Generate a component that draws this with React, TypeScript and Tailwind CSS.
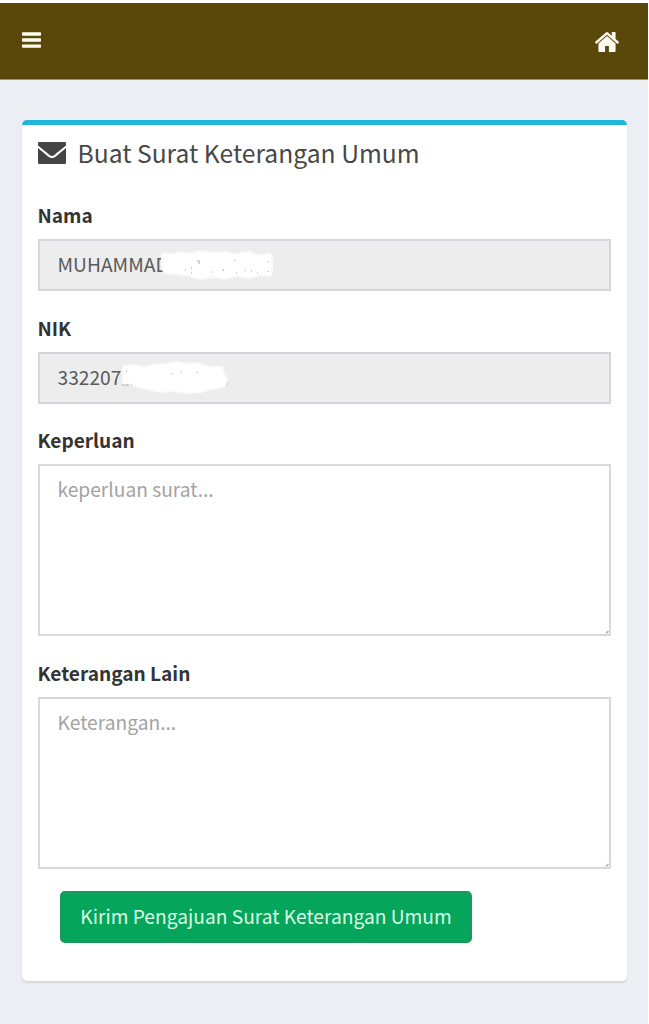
import type { ReactNode } from "react";

function BarsIcon() {
  return (
    <svg className="h-[16px] w-[19px]" viewBox="0 0 19 16" fill="#fffdf0" aria-hidden="true">
      <rect x="0" y="0.2" width="19" height="3.5" rx="0.7" />
      <rect x="0" y="6.3" width="19" height="3.4" rx="0.7" />
      <rect x="0" y="12.4" width="19" height="3.4" rx="0.7" />
    </svg>
  );
}

function HomeIcon() {
  return (
    <svg className="h-[20px] w-[24px]" viewBox="89 248 1614 1288" preserveAspectRatio="none" fill="#fffdf4" aria-hidden="true">
      <path d="M1472 992v480q0 26-19 45t-45 19h-384v-384h-256v384h-384q-26 0-45-19t-19-45v-480q0-1 .5-3t.5-3l575-474 575 474q1 2 1 6zm223-69l-62 74q-8 9-21 11h-3q-13 0-21-7l-692-577-692 577q-12 8-24 7-13-2-21-11l-62-74q-8-10-7-23.5t11-21.5l719-599q32-26 76-26t76 26l244 204v-195q0-14 9-23t23-9h192q14 0 23 9t9 23v408l219 182q10 8 11 21.5t-7 23.5z" />
    </svg>
  );
}

function EnvelopeIcon() {
  return (
    <svg className="h-[22px] w-[28px]" viewBox="0 0 28 22" fill="#444444" aria-hidden="true">
      <path d="M1.2 0H26.8Q28 0 28 1.2V3.6C24 7 19.5 10.4 16.4 13Q14 14.9 11.6 13C8.5 10.4 4 7 0 3.6V1.2Q0 0 1.2 0Z" />
      <path d="M0 6C4 9.4 7.8 12.5 10.4 14.7Q14 17.4 17.6 14.7C20.2 12.5 24 9.4 28 6V20.8Q28 22 26.8 22H1.2Q0 22 0 20.8Z" />
    </svg>
  );
}

function Label({ children, htmlFor }: { children: ReactNode; htmlFor: string }) {
  return (
    <label htmlFor={htmlFor} className="block h-[36px] text-[19.1px] leading-[25px] font-bold text-[#333]">
      {children}
    </label>
  );
}

function ReadonlyField({ id, value, children }: { id: string; value: string; children: ReactNode }) {
  return (
    <div className="relative">
      <input
        id={id}
        readOnly
        value={value}
        className="block h-[52px] w-full border-2 border-[#d5d6dc] bg-[#ededee] px-[18px] pb-[3px] text-[19.2px] text-[#5b5b5b] outline-none"
      />
      {children}
    </div>
  );
}

function TextField({ id, placeholder }: { id: string; placeholder: string }) {
  return (
    <div className="relative">
      <textarea
        id={id}
        placeholder={placeholder}
        className="block h-[172px] w-full resize-none border-2 border-[#d8d9da] bg-white px-[18px] py-[9px] text-[19.2px] leading-[28px] outline-none placeholder:text-[#a3a3a3]"
      />
      <svg className="absolute right-[2px] bottom-[2px] h-[4px] w-[4px]" viewBox="0 0 4 4" aria-hidden="true">
        <path d="M1 3.5L3.5 1" stroke="#aaa" strokeWidth="1.4" />
      </svg>
    </div>
  );
}

export default function App() {
  return (
    <div className="h-[1024px] w-full overflow-hidden bg-white pt-[3px] pr-px font-['Noto_Sans_CJK_SC','Noto_Sans',sans-serif]">
      <div className="h-full bg-[#ebeef3]">
        <header className="flex h-[77px] items-center justify-between border-b border-[#a09365] bg-[#5a480b] pr-[29px] pl-[22px]">
          <button type="button" aria-label="Menu" className="-mt-[2px]">
            <BarsIcon />
          </button>
          <a href="#" aria-label="Beranda" className="mt-px">
            <HomeIcon />
          </a>
        </header>

        <main className="pt-[40px] pr-[21px] pl-[22px]">
          <section className="h-[861px] rounded-[5px] border-t-[5px] border-[#20b6d8] bg-white pr-[16px] pl-[15.5px] shadow-[0_2px_2px_rgba(0,0,0,0.1)]">
            <h1 className="flex h-[56px] items-center gap-[12px] text-[24.65px] text-[#484848]">
              <EnvelopeIcon />
              <span className="-mt-px whitespace-nowrap">Buat Surat Keterangan Umum</span>
            </h1>

            <form className="pt-[22px]" onSubmit={(e) => e.preventDefault()}>
              <Label htmlFor="nama">Nama</Label>
              <ReadonlyField id="nama" value="MUHAMMAD">
                <svg className="absolute top-[11px] left-[121px] h-[30px] w-[118px]" viewBox="0 0 118 30" aria-hidden="true">
                  <path
                    d="M3 4L12 4L22 2L31 4L40 1L54 3L66 2L75 4L91 2L98 5L111 4L113 8V22L111 26L101 25L91 28L78 26L65 29L55 27L42 29L30 26L18 24L5 23L3 16Z"
                    fill="white" stroke="#fafafa" strokeWidth="2" strokeLinejoin="round"
                  />
                  <path d="M26 20h1M32 18h1M38 11h3M40 12v2M32 23h1M53 22h1M63 20h2M76 10v1M77 23h1M86 20h1M92 21h1M98 23h1M109 12h1M109 21v1" stroke="#aaa" strokeWidth="1" />
                </svg>
              </ReadonlyField>

              <div className="pt-[25px]">
                <Label htmlFor="nik">NIK</Label>
                <ReadonlyField id="nik" value="332207">
                  <svg className="absolute top-[8px] left-[82px] h-[36px] w-[110px]" viewBox="0 0 110 36" aria-hidden="true">
                    <path
                      d="M3 6L15 5L25 7L36 4L47 4L57 2L68 4L77 3L90 7L102 7L104 15L107 19L104 27L91 29L81 32L65 33L52 31L40 32L28 29L19 27L10 24L3 23Z"
                      fill="white" stroke="#fafafa" strokeWidth="2" strokeLinejoin="round"
                    />
                    <path d="M2 25h2M5 25h4M11 25h1M6 11h1M51 14h1M61 12h1M77 12v1M107 24h1" stroke="#aaa" strokeWidth="1" />
                  </svg>
                </ReadonlyField>
              </div>

              <div className="pt-[24px]">
                <Label htmlFor="keperluan">Keperluan</Label>
                <TextField id="keperluan" placeholder="keperluan surat..." />
              </div>

              <div className="pt-[25px]">
                <Label htmlFor="keterangan">Keterangan Lain</Label>
                <TextField id="keterangan" placeholder="Keterangan..." />
              </div>

              <button
                type="submit"
                className="mt-[22px] ml-[22.5px] block h-[52px] w-[412px] rounded-[5px] border-2 border-[#1c9858] bg-[#05a65b] pb-px text-[19.2px] whitespace-nowrap text-[#dcfbe6]"
              >
                Kirim Pengajuan Surat Keterangan Umum
              </button>
            </form>
          </section>
        </main>
      </div>
    </div>
  );
}
